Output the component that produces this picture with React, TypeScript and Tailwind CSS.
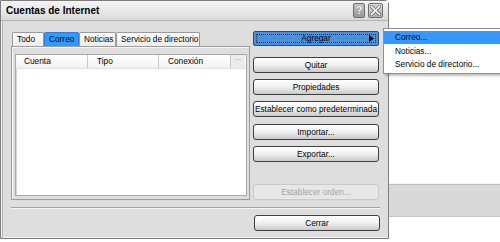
import React from "react";

const font = { fontFamily: '"Liberation Sans", Arial, sans-serif' };

function Btn({
  children,
  className = "",
  disabled = false,
}: {
  children: React.ReactNode;
  className?: string;
  disabled?: boolean;
}) {
  if (disabled) {
    return (
      <div
        className={`flex h-[16px] w-[126px] items-center justify-center whitespace-nowrap rounded-[3px] border border-[#c9c9c9] bg-[#e7e7e7] text-[8.3px] text-[#a3a3a3] ${className}`}
      >
        {children}
      </div>
    );
  }
  return (
    <div
      className={`flex h-[16px] w-[126px] items-center justify-center whitespace-nowrap rounded-[3px] border border-[#3e3e3e] bg-linear-to-b from-[#ffffff] via-[#f0f0f0] to-[#c9c9c9] text-[8.3px] text-black shadow-[inset_0_1px_0_#ffffff] ${className}`}
    >
      {children}
    </div>
  );
}

function Tab({ label, w, active = false }: { label: string; w: number; active?: boolean }) {
  return (
    <div
      style={{ width: w }}
      className={`flex h-[14px] items-center whitespace-nowrap rounded-t-[2px] border border-b-0 pl-[4px] text-[8.3px] text-black ${
        active
          ? "border-[#2f7fd6] bg-[#3399ff]"
          : "border-[#9a9a9a] bg-linear-to-b from-[#ffffff] to-[#ececec]"
      }`}
    >
      {label}
    </div>
  );
}

export default function App() {
  return (
    <div
      className="relative flex h-[242px] w-[500px] overflow-hidden bg-white"
      style={font}
    >
      {/* Dialog */}
      <div className="flex h-[239px] w-[389px] flex-col rounded-tr-[4px] border border-[#7d7d7d] bg-[#dedede] shadow-[inset_1px_0_0_#f2f2f2,inset_2px_0_0_#b4b4b4,inset_0_-1px_0_#f2f2f2]">
        {/* Title bar */}
        <div className="flex h-[20px] items-center justify-between border-b border-[#b3b3b3] bg-linear-to-b from-[#f4f4f4] via-[#e9e9e9] to-[#d9d9d9] pl-[5px] pr-[5px]">
          <span className="whitespace-nowrap text-[10px] font-bold text-black">Cuentas de Internet</span>
          <div className="flex items-center gap-[3px]">
            <div className="flex h-[15px] w-[12px] items-center justify-center rounded-[2px] border border-[#6e6e6e] bg-linear-to-b from-[#c8c8c8] to-[#979797] text-[11px] font-bold leading-none text-white [text-shadow:0_0_1px_#444]">
              ?
            </div>
            <div className="flex h-[15px] w-[15px] items-center justify-center rounded-[2px] border border-[#6e6e6e] bg-linear-to-b from-[#dadada] to-[#b0b0b0]">
              <svg width="11" height="11" viewBox="0 0 11 11">
                <path d="M1.5 1.5 L9.5 9.5 M9.5 1.5 L1.5 9.5" stroke="#6a6a6a" strokeWidth="3.2" strokeLinecap="square" />
                <path d="M1.5 1.5 L9.5 9.5 M9.5 1.5 L1.5 9.5" stroke="#ffffff" strokeWidth="1.6" strokeLinecap="square" />
              </svg>
            </div>
          </div>
        </div>

        {/* Body */}
        <div className="flex flex-1 flex-col pl-[10px] pr-[8px] pt-[11px] pb-[7px]">
          <div className="flex h-[168px] gap-[3px]">
            {/* Left: tabs */}
            <div className="flex w-[239px] flex-col">
              <div className="flex h-[14px] pl-[1px]">
                <Tab label="Todo" w={32} />
                <Tab label="Correo" w={35} active />
                <Tab label="Noticias" w={37} />
                <Tab label="Servicio de directorio" w={84} />
              </div>
              <div className="flex flex-1 flex-col border border-[#9c9c9c] pl-[3px] pr-[2px] pt-[7px] pb-[3px] shadow-[inset_1px_1px_0_#f6f6f6]">
                <div className="flex flex-1 flex-col border border-[#a7a7a7] bg-white shadow-[inset_1px_1px_0_#d4d4d4]">
                  <div className="flex h-[14px] border-b border-[#e2e2e2] bg-linear-to-b from-[#ffffff] to-[#f1f1f1] text-[8.3px] text-black">
                    <div className="flex w-[72px] items-center whitespace-nowrap border-r border-[#c8c8c8] pl-[8px]">Cuenta</div>
                    <div className="flex w-[71px] items-center whitespace-nowrap border-r border-[#c8c8c8] pl-[9px]">Tipo</div>
                    <div className="flex w-[72px] items-center whitespace-nowrap border-r border-[#c8c8c8] pl-[9px]">Conexión</div>
                    <div className="flex w-[14px] items-center justify-center bg-[#ececec]">
                      <div className="h-[6px] w-[7px] border-t border-[#d0d0d0]" />
                    </div>
                  </div>
                  <div className="flex-1" />
                </div>
              </div>
            </div>

            {/* Right: buttons */}
            <div className="flex w-[126px] flex-col">
              <div className="relative -mt-[1px] flex h-[15px] w-[126px] items-center justify-center rounded-[2px] border border-[#3a4a66] bg-[#4c90dc] text-[8.3px] text-black">
                <div className="absolute inset-[2px] border border-dotted border-[#1c2b44]" />
                <span className="relative">Agregar</span>
                <svg className="absolute right-[4px] top-[3px]" width="5" height="7" viewBox="0 0 5 7">
                  <path d="M0 0 L5 3.5 L0 7 Z" fill="#000" />
                </svg>
              </div>
              <Btn className="mt-[11px]">Quitar</Btn>
              <Btn className="mt-[6px]">Propiedades</Btn>
              <Btn className="mt-[6px]">Establecer como predeterminada</Btn>
              <Btn className="mt-[7px]">Importar...</Btn>
              <Btn className="mt-[6px]">Exportar...</Btn>
              <div className="flex-1" />
              <Btn disabled>Establecer orden...</Btn>
            </div>
          </div>

          {/* separator */}
          <div className="mt-[7px] h-[2px] border-t border-b border-t-[#a3a3a3] border-b-[#f6f6f6]" />

          <div className="mt-[6px] flex justify-end">
            <Btn>Cerrar</Btn>
          </div>
        </div>
      </div>

      {/* Background window on the right */}
      <div className="flex flex-1 flex-col">
        <div className="h-[183px]" />
        <div className="h-[34px] border-t border-b border-t-[#f4f4f4] border-b-[#c4c4c4] bg-[#d9d9d9] shadow-[inset_0_1px_0_#bdbdbd]" />
      </div>

      {/* Popup menu */}
      <div className="absolute left-[383px] top-[28px] flex h-[46px] w-[122px] flex-col border border-[#8f8f8f] bg-white py-[2px] shadow-[2px_2px_2px_rgba(0,0,0,0.25)]">
        <div className="flex h-[14px] items-center whitespace-nowrap bg-[#3399ff] pl-[11px] text-[8.3px] text-black">Correo...</div>
        <div className="flex h-[14px] items-center whitespace-nowrap pl-[11px] text-[8.3px] text-black">Noticias...</div>
        <div className="flex h-[14px] items-center whitespace-nowrap pl-[11px] text-[8.3px] text-black">Servicio de directorio...</div>
      </div>
    </div>
  );
}
